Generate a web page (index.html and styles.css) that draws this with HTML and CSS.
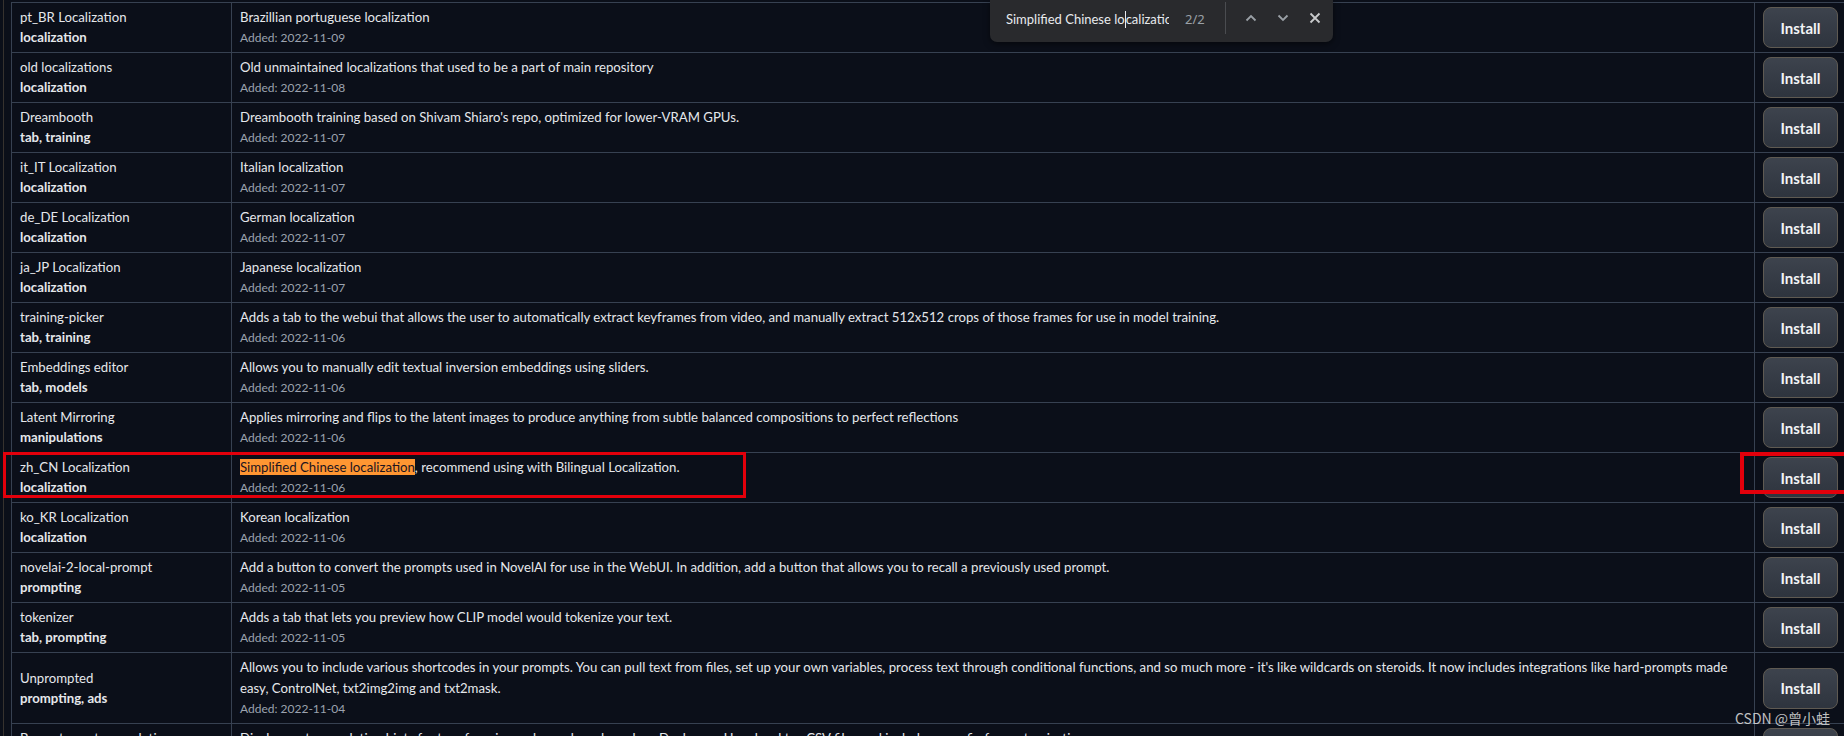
FILE: index.html
```html
<!DOCTYPE html>
<html>
<head>
<meta charset="utf-8">
<link rel="stylesheet" href="styles.css">
</head>
<body>
<div class="frame">
  <table class="ext">
    <colgroup><col class="c1"><col class="c2"><col class="c3"></colgroup>
    <tbody>
      <tr><td class="nm"><div class="name">pt_BR Localization</div><div class="tags">localization</div></td><td class="ds"><div class="desc">Brazillian portuguese localization</div><div class="date">Added: 2022-11-09</div></td><td class="bt"><button class="inst">Install</button></td></tr>
      <tr><td class="nm"><div class="name">old localizations</div><div class="tags">localization</div></td><td class="ds"><div class="desc">Old unmaintained localizations that used to be a part of main repository</div><div class="date">Added: 2022-11-08</div></td><td class="bt"><button class="inst">Install</button></td></tr>
      <tr><td class="nm"><div class="name">Dreambooth</div><div class="tags">tab, training</div></td><td class="ds"><div class="desc">Dreambooth training based on Shivam Shiaro's repo, optimized for lower-VRAM GPUs.</div><div class="date">Added: 2022-11-07</div></td><td class="bt"><button class="inst">Install</button></td></tr>
      <tr><td class="nm"><div class="name">it_IT Localization</div><div class="tags">localization</div></td><td class="ds"><div class="desc">Italian localization</div><div class="date">Added: 2022-11-07</div></td><td class="bt"><button class="inst">Install</button></td></tr>
      <tr><td class="nm"><div class="name">de_DE Localization</div><div class="tags">localization</div></td><td class="ds"><div class="desc">German localization</div><div class="date">Added: 2022-11-07</div></td><td class="bt"><button class="inst">Install</button></td></tr>
      <tr><td class="nm"><div class="name">ja_JP Localization</div><div class="tags">localization</div></td><td class="ds"><div class="desc">Japanese localization</div><div class="date">Added: 2022-11-07</div></td><td class="bt"><button class="inst">Install</button></td></tr>
      <tr><td class="nm"><div class="name">training-picker</div><div class="tags">tab, training</div></td><td class="ds"><div class="desc">Adds a tab to the webui that allows the user to automatically extract keyframes from video, and manually extract 512x512 crops of those frames for use in model training.</div><div class="date">Added: 2022-11-06</div></td><td class="bt"><button class="inst">Install</button></td></tr>
      <tr><td class="nm"><div class="name">Embeddings editor</div><div class="tags">tab, models</div></td><td class="ds"><div class="desc">Allows you to manually edit textual inversion embeddings using sliders.</div><div class="date">Added: 2022-11-06</div></td><td class="bt"><button class="inst">Install</button></td></tr>
      <tr><td class="nm"><div class="name">Latent Mirroring</div><div class="tags">manipulations</div></td><td class="ds"><div class="desc">Applies mirroring and flips to the latent images to produce anything from subtle balanced compositions to perfect reflections</div><div class="date">Added: 2022-11-06</div></td><td class="bt"><button class="inst">Install</button></td></tr>
      <tr><td class="nm"><div class="name">zh_CN Localization</div><div class="tags">localization</div></td><td class="ds"><div class="desc"><span class="hit">Simplified Chinese localization</span>, recommend using with Bilingual Localization.</div><div class="date">Added: 2022-11-06</div></td><td class="bt"><button class="inst">Install</button></td></tr>
      <tr><td class="nm"><div class="name">ko_KR Localization</div><div class="tags">localization</div></td><td class="ds"><div class="desc">Korean localization</div><div class="date">Added: 2022-11-06</div></td><td class="bt"><button class="inst">Install</button></td></tr>
      <tr><td class="nm"><div class="name">novelai-2-local-prompt</div><div class="tags">prompting</div></td><td class="ds"><div class="desc">Add a button to convert the prompts used in NovelAI for use in the WebUI. In addition, add a button that allows you to recall a previously used prompt.</div><div class="date">Added: 2022-11-05</div></td><td class="bt"><button class="inst">Install</button></td></tr>
      <tr><td class="nm"><div class="name">tokenizer</div><div class="tags">tab, prompting</div></td><td class="ds"><div class="desc">Adds a tab that lets you preview how CLIP model would tokenize your text.</div><div class="date">Added: 2022-11-05</div></td><td class="bt"><button class="inst">Install</button></td></tr>
      <tr><td class="nm"><div class="name">Unprompted</div><div class="tags">prompting, ads</div></td><td class="ds"><div class="desc">Allows you to include various shortcodes in your prompts. You can pull text from files, set up your own variables, process text through conditional functions, and so much more - it's like wildcards on steroids. It now includes integrations like hard-prompts made easy, ControlNet, txt2img2img and txt2mask.</div><div class="date">Added: 2022-11-04</div></td><td class="bt"><button class="inst">Install</button></td></tr>
      <tr><td class="nm"><div class="name">Booru tag autocompletion</div><div class="tags">tab, prompting</div></td><td class="ds"><div class="desc">Displays autocompletion hints for tags from image booru boards such as Danbooru. Uses local tag CSV files and includes a config for customization.</div><div class="date">Added: 2022-11-04</div></td><td class="bt"><button class="inst">Install</button></td></tr>
    </tbody>
  </table>
</div>

<div class="findbar">
  <div class="fb-input"><span>Simplified Chinese lo</span><span class="caret"></span><span>calization</span></div>
  <div class="fb-count">2/2</div>
  <div class="fb-sep"></div>
  <svg class="fb-icon" width="14" height="14" viewBox="0 0 14 14"><polyline points="2.5,9.5 7,5 11.5,9.5" fill="none" stroke="#9aa0a6" stroke-width="1.8"/></svg>
  <svg class="fb-icon" width="14" height="14" viewBox="0 0 14 14"><polyline points="2.5,4.5 7,9 11.5,4.5" fill="none" stroke="#9aa0a6" stroke-width="1.8"/></svg>
  <svg class="fb-icon fb-close" width="14" height="14" viewBox="0 0 14 14"><path d="M2.5 2.5 L11.5 11.5 M11.5 2.5 L2.5 11.5" fill="none" stroke="#c8cacc" stroke-width="1.8"/></svg>
</div>

<div class="mark mark-row"></div>
<div class="mark mark-btn"></div>
<div class="watermark">CSDN @曾小蛙</div>
</body>
</html>
```
FILE: styles.css
```css
html, body {
  margin: 0;
  padding: 0;
  background: #0b0f19;
  overflow: hidden;
  width: 1844px;
  height: 736px;
}
body {
  position: relative;
  font-family: "Lato", "Noto Sans", sans-serif;
  color: #e5e7eb;
}
.frame {
  margin-left: 3px;
  padding-left: 7px;
  padding-top: 2px;
  border-left: 1px solid #36322e;
  height: 800px;
}
.ext {
  border-collapse: collapse;
  table-layout: fixed;
  width: 1835px;
}
.c1 { width: 220px; }
.c2 { width: 1523px; }
.c3 { width: 92px; }
.ext td {
  border: 1px solid #374151;
  padding: 4px 8px;
  vertical-align: middle;
}
.name {
  font-size: 13.2px;
  line-height: 20px;
  color: #e5e7eb;
}
.tags {
  font-size: 13.2px;
  line-height: 21px;
  font-weight: 700;
  color: #e5e7eb;
}
.desc {
  font-size: 13.2px;
  line-height: 21px;
  color: #e5e7eb;
}
.date {
  font-size: 12px;
  line-height: 20px;
  color: #9ca3af;
}
.hit {
  background: #ff9632;
  color: #1c1420;
}
.bt { text-align: left; }
.inst {
  display: block;
  width: 75px;
  height: 41px;
  border-radius: 8px;
  border: 1px solid #5f5a52;
  background: linear-gradient(to bottom, #3d434d, #2e343e);
  color: #f3f4f6;
  font-family: "Lato", "Noto Sans", sans-serif;
  font-weight: 700;
  font-size: 15px;
  padding: 0;
}
.findbar {
  position: absolute;
  left: 990px;
  top: 0;
  width: 343px;
  height: 42px;
  background: #292a2d;
  border-radius: 0 0 7px 7px;
  box-shadow: 0 2px 6px rgba(0,0,0,0.5);
  display: flex;
  align-items: center;
  font-family: "Lato", "Noto Sans", sans-serif;
  font-size: 13px;
}
.fb-input {
  margin-left: 16px;
  width: 163px;
  overflow: hidden;
  white-space: nowrap;
  color: #e8eaed;
  display: flex;
  align-items: center;
  margin-top: -4px;
}
.caret {
  display: inline-block;
  width: 1px;
  height: 17px;
  background: #e8eaed;
  flex: none;
}
.fb-count {
  margin-left: 16px;
  color: #9aa0a6;
  width: 24px;
  margin-top: -4px;
  font-family: "Noto Sans", sans-serif;
}
.fb-sep {
  margin-left: 16px;
  width: 1px;
  height: 32px;
  background: #4a4c50;
  align-self: flex-start;
  margin-top: 2px;
}
.fb-icon {
  margin-left: 18px;
  margin-top: -6px;
}
.fb-icon + .fb-icon { margin-left: 18px; }
.mark {
  position: absolute;
  border: 3px solid #e3000b;
  box-sizing: border-box;
}
.mark-row {
  left: 3px;
  top: 452px;
  width: 743px;
  height: 46px;
}
.mark-btn {
  left: 1740px;
  top: 452px;
  width: 110px;
  height: 42px;
  border-width: 4px;
}
.watermark {
  position: absolute;
  left: 1735px;
  top: 708px;
  font-family: "Noto Sans CJK SC", "Noto Sans", sans-serif;
  font-size: 14px;
  line-height: 20px;
  color: rgba(225, 225, 225, 0.85);
}
```
